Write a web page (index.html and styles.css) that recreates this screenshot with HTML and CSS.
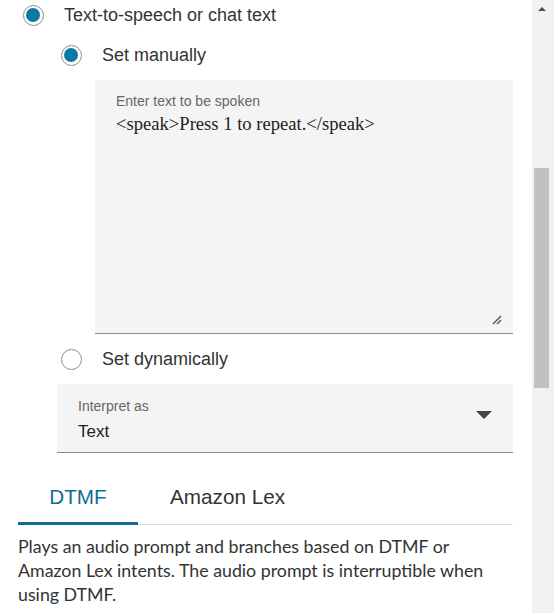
FILE: index.html
```html
<!DOCTYPE html>
<html>
<head>
<meta charset="utf-8">
<link rel="stylesheet" href="styles.css">
</head>
<body>
<div class="page">
  <main class="content">
    <div class="radio-row lvl1">
      <span class="radio checked"></span>
      <span class="radio-label">Text-to-speech or chat text</span>
    </div>
    <div class="radio-row lvl2">
      <span class="radio checked"></span>
      <span class="radio-label">Set manually</span>
    </div>
    <div class="textarea">
      <div class="field-label">Enter text to be spoken</div>
      <div class="textarea-value">&lt;speak&gt;Press 1 to repeat.&lt;/speak&gt;</div>
      <svg class="resize" width="10" height="10" viewBox="0 0 10 10"><path d="M1 9 L9 1 M5 9 L9 5" stroke="#555" stroke-width="1.4" fill="none"/></svg>
    </div>
    <div class="radio-row lvl2">
      <span class="radio"></span>
      <span class="radio-label">Set dynamically</span>
    </div>
    <div class="select">
      <div class="select-text">
        <div class="field-label">Interpret as</div>
        <div class="select-value">Text</div>
      </div>
      <span class="caret"></span>
    </div>
    <div class="tabs">
      <div class="tab active">DTMF</div>
      <div class="tab">Amazon Lex</div>
    </div>
    <p class="desc">Plays an audio prompt and branches based on DTMF or Amazon Lex intents. The audio prompt is interruptible when using DTMF.</p>
  </main>
  <div class="scrollbar">
    <span class="sb-arrow"></span>
    <span class="sb-thumb"></span>
  </div>
</div>
</body>
</html>
```
FILE: styles.css
```css
html, body {
  margin: 0;
  padding: 0;
  background: #fff;
}
body {
  font-family: "Liberation Sans", Arial, sans-serif;
  color: #333;
  overflow: hidden;
}
.page {
  display: flex;
  width: 554px;
  height: 613px;
  overflow: hidden;
}
.content {
  flex: 1;
  padding: 0 19px 0 18px;
  min-width: 0;
}
.radio-row {
  display: flex;
  align-items: center;
  height: 30px;
}
.radio-row.lvl1 {
  padding-left: 5px;
}
.radio-row.lvl2 {
  padding-left: 43px;
  margin-top: 10px;
}
.radio {
  box-sizing: border-box;
  width: 21px;
  height: 21px;
  border-radius: 50%;
  border: 1.5px solid #8a8a8a;
  background: #fff;
  position: relative;
  flex: none;
}
.radio.checked::after {
  content: "";
  position: absolute;
  left: 2px;
  top: 2px;
  width: 14px;
  height: 14px;
  border-radius: 50%;
  background: #0a7aa5;
}
.radio-label {
  margin-left: 20px;
  font-size: 18px;
  color: #333;
}
.textarea {
  position: relative;
  margin: 10px 0 0 77px;
  height: 240px;
  background: #f4f4f4;
  border-bottom: 1.5px solid #8a8a8a;
  padding: 13px 21px 0;
}
.field-label {
  font-size: 14px;
  color: #666;
  line-height: 16px;
}
.textarea-value {
  margin-top: 5px;
  font-family: "Liberation Serif", serif;
  font-size: 18.6px;
  color: #222;
  line-height: 20px;
}
.resize {
  position: absolute;
  right: 11px;
  bottom: 8px;
}
.select {
  margin: 10px 0 0 39px;
  height: 68px;
  background: #f4f4f4;
  border-bottom: 1.5px solid #8a8a8a;
  display: flex;
  align-items: center;
  padding: 0 21px;
}
.select-text {
  flex: 1;
  padding-top: 4px;
}
.select-value {
  margin-top: 8px;
  font-size: 17px;
  color: #222;
  line-height: 20px;
}
.caret {
  width: 0;
  height: 0;
  border-left: 8px solid transparent;
  border-right: 8px solid transparent;
  border-top: 8px solid #444;
  margin-top: -6px;
}
.tabs {
  display: flex;
  height: 71px;
  border-bottom: 1px solid #ddd;
  align-items: stretch;
}
.tab {
  font-size: 20.7px;
  color: #333;
  padding: 34px 32px 0;
  box-sizing: border-box;
  line-height: 20px;
}
.tab.active {
  width: 120px;
  text-align: center;
  padding-left: 0;
  padding-right: 0;
  color: #0e6f94;
  border-bottom: 3px solid #0e6f94;
  margin-bottom: -1px;
}
.desc {
  margin: 9px 0 0;
  max-width: 480px;
  font-family: Lato, "Open Sans", sans-serif;
  font-size: 17.8px;
  line-height: 24px;
  color: #333;
}
.scrollbar {
  width: 22px;
  flex: none;
  background: #f1f1f1;
  padding-right: 3px;
  box-sizing: border-box;
  display: flex;
  flex-direction: column;
  align-items: center;
}
.sb-arrow {
  margin-top: 7px;
  width: 0;
  height: 0;
  border-left: 4.5px solid transparent;
  border-right: 4.5px solid transparent;
  border-bottom: 4.5px solid #505050;
}
.sb-thumb {
  margin-top: 157px;
  width: 15px;
  height: 220px;
  background: #c1c1c1;
}
```
